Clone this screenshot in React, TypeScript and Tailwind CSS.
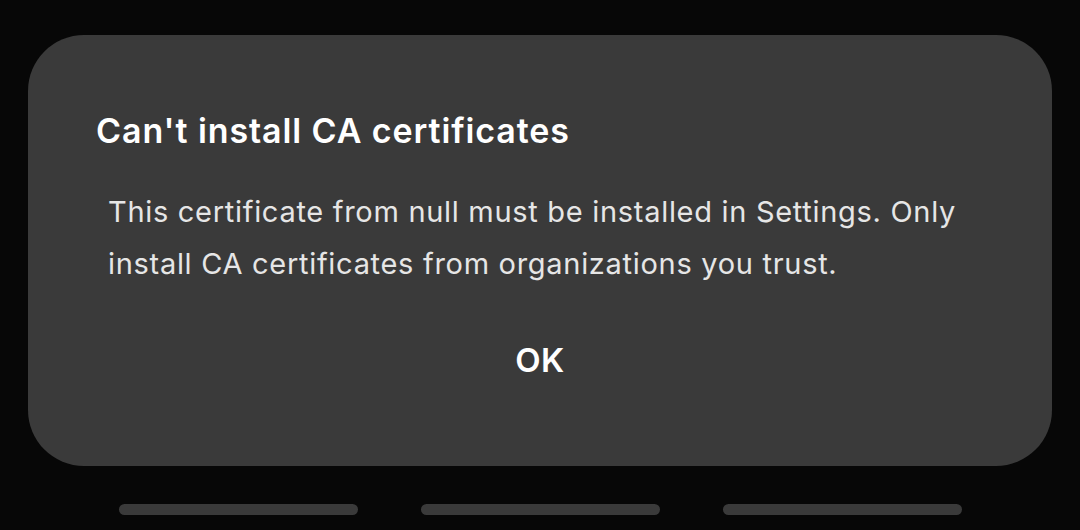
export default function App() {
  return (
    <div
      className="w-[1080px] h-[530px] bg-[#070707] overflow-hidden flex flex-col items-center"
      style={{ fontFamily: "Inter, 'Noto Sans', sans-serif" }}
    >
      <div className="mt-[35px] w-[1024px] h-[431px] bg-[#3a3a3a] rounded-[56px] flex flex-col">
        <h1 className="mt-[76px] ml-[68px] text-[34px] leading-[40px] font-semibold text-white tracking-[0.9px]">
          Can't install CA certificates
        </h1>
        <p className="mt-[35px] ml-[80px] mr-[50px] text-[29px] leading-[52px] text-[#e6e6e6] tracking-[0.7px]">
          This certificate from null must be installed in Settings. Only install CA certificates from organizations you trust.
        </p>
        <div className="mt-[50px] text-center text-[33px] leading-[40px] font-semibold text-white tracking-[0.5px]">OK</div>
      </div>
      <div className="mt-[38px] flex gap-[63px]">
        <div className="w-[239px] h-[11px] rounded-full bg-[#3a3a3a]" />
        <div className="w-[239px] h-[11px] rounded-full bg-[#3a3a3a]" />
        <div className="w-[239px] h-[11px] rounded-full bg-[#3a3a3a]" />
      </div>
    </div>
  );
}
